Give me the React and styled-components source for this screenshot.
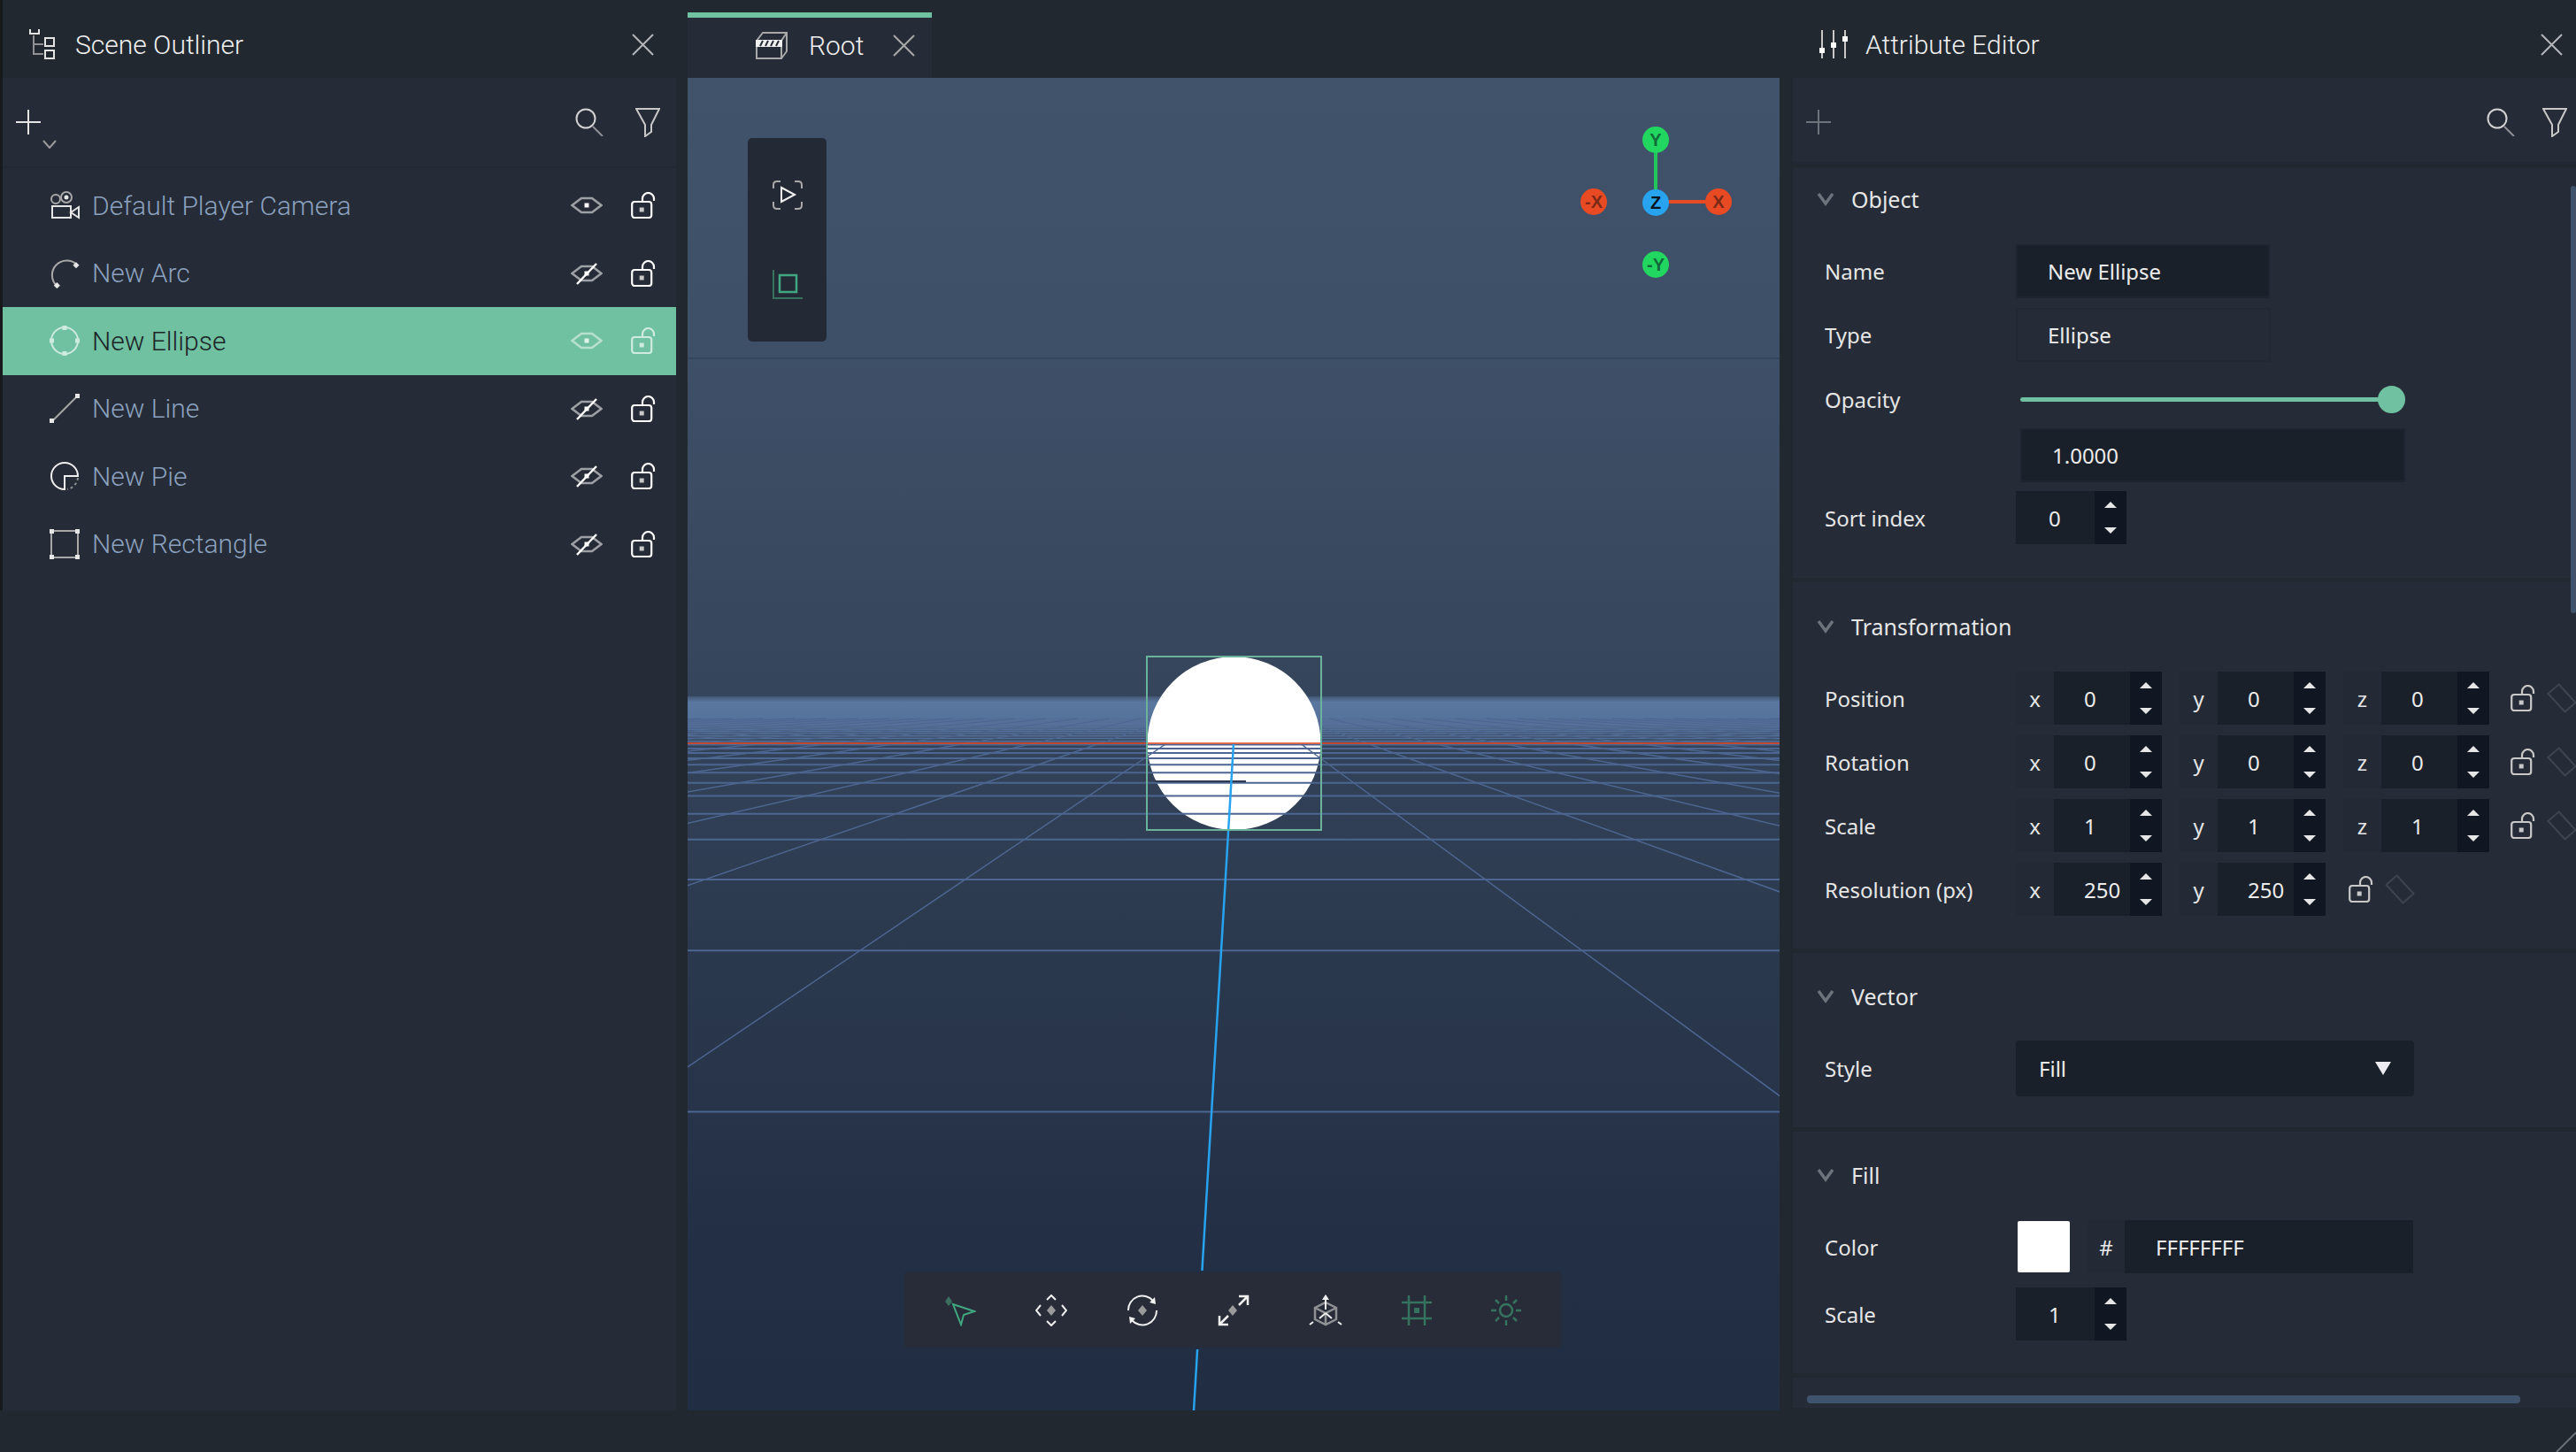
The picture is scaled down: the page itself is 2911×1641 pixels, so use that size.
import React from 'react';
import styled, { createGlobalStyle } from 'styled-components';

const GlobalStyle = createGlobalStyle`
  html, body {
    margin: 0;
    padding: 0;
    background: #212830;
    overflow: hidden;
  }
  * {
    box-sizing: border-box;
  }
`;

const Page = styled.div`
  position: relative;
  width: 2911px;
  height: 1641px;
  display: flex;
  flex-direction: column;
  background: #212830;
  color: #e8e8e8;
  font-family: Roboto, sans-serif;
  overflow: hidden;
`;
const Main = styled.div`
  display: flex;
  height: 1594px;
`;
const Grip = styled.svg`
  position: absolute;
  right: 0;
  bottom: 0;
`;

/* shared panel parts */
const PanelHeader = styled.div`
  height: 88px;
  flex: none;
  display: flex;
  align-items: center;
  padding-top: 12px;
  padding-left: ${(p) => p.$pl}px;
  padding-right: ${(p) => p.$pr}px;
`;
const PanelTitle = styled.div`
  font-size: 30px;
  font-weight: 300;
  color: #f0f0f0;
  margin-left: ${(p) => p.$ml}px;
  flex: 1;
`;
const Toolbar = styled.div`
  height: ${(p) => p.$h}px;
  flex: none;
  display: flex;
  align-items: center;
  padding-top: ${(p) => p.$pt || 0}px;
  padding-right: ${(p) => p.$pr}px;
  background: #252b37;
  border-bottom: 2px solid #212a34;
`;
const ToolGap = styled.div`
  width: ${(p) => p.$w}px;
  flex: none;
`;
const Spacer = styled.div`
  flex: 1;
`;

/* left panel */
const LeftColumn = styled.div`
  width: 777px;
  flex: none;
  display: flex;
  flex-direction: column;
  border-left: 3px solid #17191d;
`;
const LeftBody = styled.div`
  width: 761px;
  flex: 1;
  display: flex;
  flex-direction: column;
  background: #252b37;
`;
const AddWrap = styled.div`
  position: relative;
  width: 28px;
  height: 28px;
  margin-left: 15px;
`;
const AddChevron = styled.svg`
  position: absolute;
  left: 30px;
  top: 34px;
`;
const List = styled.div`
  padding-top: 4px;
`;
const ListRow = styled.div`
  height: 76.5px;
  display: flex;
  align-items: center;
  padding-left: 53px;
  padding-right: 23px;
  background: ${(p) => (p.$active ? '#70c1a1' : 'transparent')};
  color: ${(p) => (p.$active ? '#1c2428' : '#8ba1be')};
`;
const RowIcon = styled.div`
  width: 34px;
  height: 34px;
  display: flex;
  align-items: center;
  justify-content: center;
  margin-right: 14px;
`;
const RowName = styled.div`
  flex: 1;
  font-size: 30px;
  font-weight: 300;
`;
const RowActions = styled.div`
  display: flex;
  align-items: center;
  gap: 32px;
`;

/* centre */
const CenterColumn = styled.div`
  width: 1234px;
  flex: none;
  display: flex;
  flex-direction: column;
`;
const TabStrip = styled.div`
  height: 88px;
  flex: none;
  padding-top: 14px;
  display: flex;
`;
const Tab = styled.div`
  width: 276px;
  display: flex;
  align-items: center;
  padding-left: 77px;
  padding-bottom: 5px;
  background: #252b37;
  border-top: 6px solid #70c1a1;
`;
const TabTitle = styled.div`
  font-size: 30px;
  font-weight: 300;
  margin-left: 24px;
  margin-right: 33px;
  color: #f0f0f0;
`;
const Viewport = styled.div`
  position: relative;
  flex: 1;
  overflow: hidden;
  background: linear-gradient(
    180deg,
    #41536b 0%,
    #3e5068 20%,
    #36465c 44%,
    #2a384d 67%,
    #27344a 77%,
    #222f44 87%,
    #202d42 100%
  );
`;
const GridSvg = styled.svg`
  position: absolute;
  left: 0;
  top: 0;
`;
const SideTools = styled.div`
  position: absolute;
  left: 68px;
  top: 68px;
  width: 89px;
  height: 230px;
  display: flex;
  flex-direction: column;
  align-items: center;
  justify-content: center;
  gap: 68px;
  background: #232a36;
  border-radius: 5px;
`;
const BottomTools = styled.div`
  position: absolute;
  left: 243px;
  top: 1348px;
  width: 746px;
  height: 89px;
  display: flex;
  align-items: center;
  justify-content: space-between;
  padding: 0 45px;
  background: #272c38;
  border: 2px solid #222f42;
  border-radius: 6px;
`;
const AxisBall = styled.div`
  position: absolute;
  left: ${(p) => p.$x - 777 - 15}px;
  top: ${(p) => p.$y - 88 - 15}px;
  width: 30px;
  height: 30px;
  border-radius: 50%;
  display: flex;
  align-items: center;
  justify-content: center;
  background: ${(p) => p.$bg};
  color: ${(p) => p.$fg};
  font-family: 'Liberation Sans', sans-serif;
  font-size: 20px;
  font-weight: 700;
`;

/* right panel */
const RightColumn = styled.div`
  position: relative;
  width: 900px;
  flex: none;
  display: flex;
  flex-direction: column;
`;
const RightBody = styled.div`
  margin-left: 15px;
  flex: 1;
  display: flex;
  flex-direction: column;
  gap: 5px;
  overflow: hidden;
`;
const Section = styled.div`
  background: #252b37;
  padding-top: ${(p) => p.$pt}px;
  padding-bottom: ${(p) => p.$pb}px;
`;
const SectionHeader = styled.div`
  height: 70px;
  margin-bottom: 10px;
  display: flex;
  align-items: center;
  padding-left: 27px;
  gap: 19px;
  font-family: 'Noto Sans', sans-serif;
  font-size: 25px;
  color: #e6e6e6;
`;
const Row = styled.div`
  height: ${(p) => p.$h || 72}px;
  margin-top: ${(p) => p.$mt || 0}px;
  display: flex;
  align-items: center;
  padding-left: 36px;
  font-family: 'Noto Sans', sans-serif;
  font-size: 24px;
`;
const Label = styled.div`
  width: 216px;
  flex: none;
  color: #e6e6e6;
`;
const Field = styled.div`
  width: ${(p) => p.$w}px;
  height: 61px;
  display: flex;
  align-items: center;
  margin-left: ${(p) => p.$ml || 0}px;
  padding-left: ${(p) => p.$pl}px;
  background: ${(p) => (p.$ghost ? '#252b37' : '#1a202a')};
  border: 2px solid ${(p) => (p.$ghost ? '#232934' : '#1f2530')};
  color: #ececec;
`;
const SliderTrack = styled.div`
  position: relative;
  width: 435px;
  height: 5px;
  margin-left: 5px;
  border-radius: 3px;
  background: #70c1a1;
`;
const SliderKnob = styled.div`
  position: absolute;
  right: 0;
  top: -13px;
  width: 31px;
  height: 31px;
  border-radius: 50%;
  background: #70c1a1;
`;
const Spin = styled.div`
  width: ${(p) => p.$w || 165}px;
  height: 60px;
  flex: none;
  display: flex;
  background: #232a35;
`;
const SpinAxis = styled.div`
  width: 43px;
  flex: none;
  display: flex;
  align-items: center;
  justify-content: center;
  color: #e6e6e6;
`;
const SpinValue = styled.div`
  flex: 1;
  display: flex;
  align-items: center;
  padding-left: ${(p) => p.$pl}px;
  background: #1a202a;
  color: #ececec;
`;
const SpinButtons = styled.div`
  width: 36px;
  flex: none;
  display: flex;
  flex-direction: column;
  align-items: center;
  justify-content: space-between;
  padding: 12px 0;
  background: #111722;
`;
const Arrow = styled.div`
  width: 0;
  height: 0;
  border-left: 7px solid transparent;
  border-right: 7px solid transparent;
  border-bottom: ${(p) => (p.$down ? '0' : '7px solid #e6e6e6')};
  border-top: ${(p) => (p.$down ? '7px solid #e6e6e6' : '0')};
`;
const SpinRow = styled.div`
  display: flex;
  gap: 20px;
`;
const LockWrap = styled.div`
  margin-left: ${(p) => p.$ml}px;
  display: flex;
  align-items: center;
  gap: 13px;
`;
const Select = styled.div`
  width: 450px;
  height: 63px;
  display: flex;
  align-items: center;
  justify-content: space-between;
  padding: 0 26px;
  background: #1a202a;
  border-radius: 4px;
  color: #ececec;
`;
const SelectArrow = styled.div`
  width: 0;
  height: 0;
  border-left: 9px solid transparent;
  border-right: 9px solid transparent;
  border-top: 15px solid #ecebf2;
`;
const Swatch = styled.div`
  width: 59px;
  height: 58px;
  margin-left: 2px;
  border-radius: 2px;
  background: #ffffff;
`;
const Hash = styled.div`
  width: 42px;
  height: 60px;
  margin-left: 20px;
  display: flex;
  align-items: center;
  justify-content: center;
  background: #232a35;
`;
const HexField = styled.div`
  width: 326px;
  height: 60px;
  display: flex;
  align-items: center;
  padding-left: 35px;
  background: #1a202a;
  color: #ececec;
`;
const HScrollBand = styled.div`
  height: 34px;
  flex: none;
  padding: 20px 0 0 16px;
  background: #252b37;
`;
const HScrollThumb = styled.div`
  width: 806px;
  height: 9px;
  border-radius: 4px;
  background: #40536c;
`;
const VScrollThumb = styled.div`
  position: absolute;
  right: 0;
  top: 210px;
  width: 6px;
  height: 483px;
  border-radius: 3px;
  background: #40536c;
`;

/* icons */
const CloseIcon = ({ color = '#b4b6ba', size = 25 }) => (
  <svg width={size} height={size} viewBox="0 0 25 25" fill="none" stroke={color} strokeWidth="2">
    <path d="M1 1 L24 24 M24 1 L1 24" />
  </svg>
);
const PlusIcon = ({ color = '#e6e6e6', size = 28 }) => (
  <svg width={size} height={size} viewBox="0 0 28 28" fill="none" stroke={color} strokeWidth="2">
    <path d="M14 0 V28 M0 14 H28" />
  </svg>
);
const SearchIcon = ({ color = '#d2d2d2', eye = '#8f9195' }) => (
  <svg width="32" height="32" viewBox="0 0 32 32" fill="none" strokeWidth="2">
    <circle cx="12" cy="12" r="10.5" stroke={color} />
    <path d="M20 21 L31 32" stroke={eye} />
  </svg>
);
const FilterIcon = () => (
  <svg width="28" height="33" viewBox="0 0 28 33" fill="none" stroke="#c8c8c8" strokeWidth="2">
    <path d="M1 1 H27 L18 19 V27 L11 32 V19 Z" />
  </svg>
);
const LockIcon = ({ color = '#ffffff', dim = '#c8c8c8' }) => (
  <svg width="28" height="30" viewBox="0 0 28 30" fill="none" strokeWidth="2.2">
    <rect x="1.2" y="11" width="22" height="18" rx="3" stroke={color} />
    <rect x="9.7" y="17.5" width="5" height="5" fill={dim} />
    <path d="M13 11 V7.5 a6.5 6.5 0 0 1 13 0 V10" stroke={color} />
  </svg>
);
const EyeIcon = ({ off, color = '#9da1a5', dot = '#ffffff' }) => (
  <svg width="36" height="26" viewBox="0 0 36 26" fill="none" strokeWidth="2.5">
    <path d="M1.5 13 L12 5 H24 L34.5 13 L24 21 H12 Z" stroke={color} />
    <rect x="15.5" y="10.5" width="5" height="5" fill={dot} />
    {off && <path d="M7 25 L29 2" stroke="#ffffff" />}
  </svg>
);
const LinkIcon = () => (
  <svg width="34" height="34" viewBox="0 0 34 34" fill="none" stroke="#3e444f" strokeWidth="2.2" strokeLinejoin="round">
    <path d="M1.5 12 L13.5 1.5 L32.5 22 L20.5 32.5 Z" />
  </svg>
);
const ChevronIcon = () => (
  <svg width="20" height="16" viewBox="0 0 20 16" fill="none" stroke="#6d727b" strokeWidth="3.5">
    <path d="M2 2 L10 13 L18 2" />
  </svg>
);
const OutlinerIcon = () => (
  <svg width="30" height="34" viewBox="0 0 30 34" fill="none" stroke="#e4e4e4" strokeWidth="2">
    <path d="M1 0 V5 H11 V0" />
    <path d="M5 7 V28 H16 M5 17 H16" stroke="#8f9195" />
    <rect x="18" y="10" width="10" height="9" />
    <rect x="18" y="24" width="10" height="9" />
  </svg>
);
const CameraIcon = () => (
  <svg width="34" height="32" viewBox="0 0 34 32" fill="none" stroke="#e6e6e6" strokeWidth="2">
    <circle cx="7" cy="9" r="5" stroke="#a8a8a8" />
    <circle cx="19" cy="7" r="6" stroke="#a8a8a8" />
    <circle cx="19" cy="7" r="1.5" fill="#e6e6e6" />
    <rect x="3" y="17" width="21" height="13" />
    <path d="M24 24 L33 18 V30 Z" />
  </svg>
);
const ArcIcon = () => (
  <svg width="34" height="34" viewBox="0 0 34 34" fill="none" stroke="#a8a8a8" strokeWidth="2">
    <path d="M8 31 A16 16 0 0 1 31 7" />
    <rect x="5.5" y="28" width="5" height="5" fill="#e6e6e6" stroke="none" transform="rotate(45 8 31)" />
    <rect x="28" y="5" width="5" height="5" fill="#e6e6e6" stroke="none" transform="rotate(45 30 7)" />
  </svg>
);
const EllipseIcon = ({ color = '#cfeadf' }) => (
  <svg width="34" height="34" viewBox="0 0 34 34" fill="none" stroke={color} strokeWidth="2">
    <circle cx="17" cy="17" r="15" />
    <g fill={color} stroke="none">
      <rect x="14.5" y="0" width="5" height="5" />
      <rect x="14.5" y="29" width="5" height="5" />
      <rect x="0" y="14.5" width="5" height="5" />
      <rect x="29" y="14.5" width="5" height="5" />
    </g>
  </svg>
);
const LineIcon = () => (
  <svg width="34" height="34" viewBox="0 0 34 34" fill="none" stroke="#a8a8a8" strokeWidth="2">
    <path d="M3 31 L31 3" />
    <rect x="0" y="28" width="5" height="5" fill="#e6e6e6" stroke="none" />
    <rect x="29" y="0" width="5" height="5" fill="#e6e6e6" stroke="none" />
  </svg>
);
const PieIcon = () => (
  <svg width="34" height="34" viewBox="0 0 34 34" fill="none" stroke="#f0f0f0" strokeWidth="2">
    <path d="M17 32 A15 15 0 1 1 32 17 H17 Z" />
    <path d="M32 19 A15 15 0 0 1 20 32" stroke="#8f9195" strokeDasharray="3 3" />
  </svg>
);
const RectIcon = () => (
  <svg width="34" height="34" viewBox="0 0 34 34" fill="none" stroke="#a8a8a8" strokeWidth="2">
    <rect x="2" y="2" width="30" height="30" />
    <g fill="#e6e6e6" stroke="none">
      <rect x="0" y="0" width="5" height="5" />
      <rect x="29" y="0" width="5" height="5" />
      <rect x="0" y="29" width="5" height="5" />
      <rect x="29" y="29" width="5" height="5" />
    </g>
  </svg>
);
const ClapperIcon = () => (
  <svg width="36" height="33" viewBox="0 0 36 33" fill="none" stroke="#a8a8a8" strokeWidth="2">
    <path d="M1 11 L8 2 H35 L29 11 M35 2 V23 L29 31" />
    <path d="M1 11 H29 V31 H1 Z" />
    <path d="M1 11 H29 V17 H1 Z" fill="#f0f0f0" stroke="#f0f0f0" />
    <path d="M5 17 L8 11 M11 17 L14 11 M17 17 L20 11 M23 17 L26 11" stroke="#252b37" />
  </svg>
);
const SlidersIcon = () => (
  <svg width="32" height="32" viewBox="0 0 32 32" fill="none" stroke="#c8c8c8" strokeWidth="2">
    <path d="M3 0 V32 M16 0 V32 M29 0 V32" />
    <g fill="#ffffff" stroke="none">
      <rect x="0" y="20" width="6" height="6" />
      <rect x="13" y="14" width="6" height="6" />
      <rect x="26" y="7" width="6" height="6" />
    </g>
  </svg>
);
const PlayFrameIcon = () => (
  <svg width="34" height="33" viewBox="0 0 34 33" fill="none" stroke="#a8a8a8" strokeWidth="2">
    <path d="M1 9 V5 Q1 1 5 1 H9 M25 1 H29 Q33 1 33 5 V9 M33 24 V28 Q33 32 29 32 H25 M9 32 H5 Q1 32 1 28 V24" />
    <path d="M10 8 L25 16 L10 24 Z" stroke="#f0f0f0" />
  </svg>
);
const FrameIcon = () => (
  <svg width="34" height="33" viewBox="0 0 34 33" fill="none">
    <path d="M1 0 V32 H34" stroke="#35735f" strokeWidth="2" />
    <rect x="8" y="6" width="19" height="19" stroke="#41a780" strokeWidth="2.5" />
  </svg>
);
const SelectToolIcon = () => (
  <svg width="36" height="36" viewBox="0 0 36 36" fill="none">
    <path d="M5 2 L9 8 L5 13 L1 8 Z" fill="#3c6e5e" />
    <path d="M10 11 L34 19 L22 23 L19 34 Z" stroke="#41a780" strokeWidth="2" />
  </svg>
);
const MoveToolIcon = () => (
  <svg width="36" height="36" viewBox="0 0 36 36" fill="none" stroke="#f0f0f0" strokeWidth="2">
    <path d="M13 6 L18 1 L23 6 M13 30 L18 35 L23 30 M6 12 L1 18 L6 24 M30 12 L35 18 L30 24" />
    <path d="M18 12 L23 18 L18 24 L13 18 Z" fill="#9a9a9a" stroke="none" />
  </svg>
);
const RotateToolIcon = () => (
  <svg width="36" height="36" viewBox="0 0 36 36" fill="none" stroke="#f0f0f0" strokeWidth="2">
    <path d="M2 18 A16 16 0 0 1 30 7" />
    <path d="M34 18 A16 16 0 0 1 6 29" />
    <path d="M26 9 L33 11 L32 3 Z M10 27 L3 25 L4 33 Z" fill="#f0f0f0" stroke="none" />
    <path d="M18 12 L23 18 L18 24 L13 18 Z" fill="#9a9a9a" stroke="none" />
  </svg>
);
const ScaleToolIcon = () => (
  <svg width="36" height="36" viewBox="0 0 36 36" fill="none" stroke="#f0f0f0" strokeWidth="2.5">
    <path d="M24 12 L34 2 M24 2 H34 V12 M12 24 L2 34 M2 24 V34 H12" />
    <path d="M17 12 L22 18 L17 24 L12 18 Z" fill="#9a9a9a" stroke="none" />
  </svg>
);
const CubeToolIcon = () => (
  <svg width="38" height="36" viewBox="0 0 38 36" fill="none" stroke="#8f9195" strokeWidth="2.5">
    <path d="M19 9 L31 15 V28 L19 34 L7 28 V15 Z M7 15 L19 21 L31 15 M19 21 V34" />
    <path d="M19 17 V1 M19 21 L12 27 M19 21 L26 27 M5 31 L1 34 M33 31 L37 34" stroke="#f0f0f0" strokeWidth="2" />
    <path d="M15 6 L19 0 L23 6 Z" fill="#f0f0f0" stroke="none" />
  </svg>
);
const SnapToolIcon = () => (
  <svg width="34" height="34" viewBox="0 0 34 34" fill="none" stroke="#35735f" strokeWidth="2.5">
    <path d="M8 0 V34 M26 0 V34 M0 8 H34 M0 26 H34" />
    <rect x="14" y="14" width="6" height="6" fill="#35735f" stroke="none" />
  </svg>
);
const SunToolIcon = () => (
  <svg width="34" height="34" viewBox="0 0 34 34" fill="none" stroke="#35735f" strokeWidth="2.5">
    <circle cx="17" cy="17" r="7" />
    <path d="M17 0 V6 M17 28 V34 M0 17 H6 M28 17 H34 M5 5 L9 9 M25 25 L29 29 M5 29 L9 25 M25 9 L29 5" />
  </svg>
);

/* 3d grid, coordinates are page pixels through the viewBox */
const VANISH_X = 1397;
const VANISH_Y = 787;
const rowY = (k) => VANISH_Y + 1 / (0.00213 + 0.00135 * k);
const colX = (n, y) => VANISH_X + (y - VANISH_Y) * (-0.06 + 1.42 * n);
const GRID = '#4d6691';

const horizontals = (from, to) => {
  const out = [];
  for (let k = 0; k < 140; k++) {
    const y = rowY(k);
    if (y >= from && y < to) out.push(y);
  }
  return out;
};
const columns = [];
for (let n = -70; n <= 70; n++) if (n !== 0) columns.push(n);

const Grid = () => (
  <GridSvg width="1234" height="1506" viewBox="777 88 1234 1506">
    <defs>
      <linearGradient id="band" x1="0" y1="0" x2="0" y2="1">
        <stop offset="0" stopColor="#435672" />
        <stop offset="0.12" stopColor="#5a779f" />
        <stop offset="0.55" stopColor="#55729b" />
        <stop offset="0.68" stopColor="#3f5372" />
        <stop offset="1" stopColor="#36465f" />
      </linearGradient>
    </defs>
    <path d="M777 405 H2011" stroke="#34465e" strokeWidth="2" />
    <rect x="777" y="787" width="1234" height="53" fill="url(#band)" />
    {horizontals(812, 840.5).map((y) => (
      <path key={y} d={`M777 ${y} H2011`} stroke="#557199" strokeWidth="1.5" />
    ))}
    {columns.map((n) => (
      <path
        key={n}
        d={`M${colX(n, 812)} 812 L${colX(n, 841)} 841`}
        stroke="#4d6691"
        strokeWidth="1"
      />
    ))}
    <circle cx="1394.5" cy="840" r="98" fill="#ffffff" />
    {horizontals(840.5, 2000).map((y) => (
      <path key={y} d={`M777 ${y} H2011`} stroke={GRID} strokeWidth="2" />
    ))}
    {columns.map((n) => (
      <path
        key={n}
        d={`M${colX(n, 841)} 841 L${colX(n, 1594)} 1594`}
        stroke={GRID}
        strokeWidth="1.5"
      />
    ))}
    <path d="M1305 883 H1408" stroke="#2d3a50" strokeWidth="2" />
    <path d="M1394 840 L1349 1594" stroke="#27a3ef" strokeWidth="2.5" />
    <path d="M777 840 H2011" stroke="#e8481f" strokeWidth="1.5" />
    <rect x="1296" y="742" width="197" height="196" fill="none" stroke="#6ab39a" strokeWidth="2" />
    <path d="M1871 172 V222" stroke="#22c45c" strokeWidth="4" />
    <path d="M1885 228 H1930" stroke="#e84a23" strokeWidth="4" />
  </GridSvg>
);

const rows = [
  { name: 'Default Player Camera', icon: <CameraIcon /> },
  { name: 'New Arc', icon: <ArcIcon />, off: true },
  { name: 'New Ellipse', icon: <EllipseIcon />, active: true },
  { name: 'New Line', icon: <LineIcon />, off: true },
  { name: 'New Pie', icon: <PieIcon />, off: true },
  { name: 'New Rectangle', icon: <RectIcon />, off: true },
];

const balls = [
  { x: 1871, y: 158, bg: '#22d760', fg: '#116a3a', t: 'Y' },
  { x: 1801, y: 228, bg: '#e84a23', fg: '#7c2a17', t: '-X' },
  { x: 1942, y: 228, bg: '#e84a23', fg: '#7c2a17', t: 'X' },
  { x: 1871, y: 229, bg: '#27a3ef', fg: '#07131f', t: 'Z' },
  { x: 1871, y: 299, bg: '#22d760', fg: '#116a3a', t: '-Y' },
];

const Spinner = ({ axis, value }) => (
  <Spin>
    <SpinAxis>{axis}</SpinAxis>
    <SpinValue $pl={34}>{value}</SpinValue>
    <SpinButtons>
      <Arrow />
      <Arrow $down />
    </SpinButtons>
  </Spin>
);
const SmallSpinner = ({ value }) => (
  <Spin $w={125}>
    <SpinValue $pl={37}>{value}</SpinValue>
    <SpinButtons>
      <Arrow />
      <Arrow $down />
    </SpinButtons>
  </Spin>
);
const TripleRow = ({ label, value }) => (
  <Row>
    <Label>{label}</Label>
    <SpinRow>
      <Spinner axis="x" value={value} />
      <Spinner axis="y" value={value} />
      <Spinner axis="z" value={value} />
    </SpinRow>
    <LockWrap $ml={24}>
      <LockIcon color="#c8c8c8" />
      <LinkIcon />
    </LockWrap>
  </Row>
);

const App = () => {
  return (
    <Page>
      <GlobalStyle />
      <Main>
        <LeftColumn>
          <PanelHeader $pl={30} $pr={38}>
            <OutlinerIcon />
            <PanelTitle $ml={22}>Scene Outliner</PanelTitle>
            <CloseIcon />
          </PanelHeader>
          <LeftBody>
            <Toolbar $h={102} $pr={18}>
              <AddWrap>
                <PlusIcon />
                <AddChevron width="16" height="10" viewBox="0 0 16 10" fill="none" stroke="#9a9a9a" strokeWidth="2">
                  <path d="M1 1 L8 9 L15 1" />
                </AddChevron>
              </AddWrap>
              <Spacer />
              <SearchIcon />
              <ToolGap $w={36} />
              <FilterIcon />
            </Toolbar>
            <List>
              {rows.map((r) => (
                <ListRow key={r.name} $active={r.active}>
                  <RowIcon>{r.icon}</RowIcon>
                  <RowName>{r.name}</RowName>
                  <RowActions>
                    <EyeIcon
                      off={r.off}
                      color={r.active ? '#b7e0cf' : '#9da1a5'}
                      dot={r.active ? '#dff3ea' : '#ffffff'}
                    />
                    <LockIcon
                      color={r.active ? '#cfeadf' : '#ffffff'}
                      dim={r.active ? '#cfeadf' : '#c8c8c8'}
                    />
                  </RowActions>
                </ListRow>
              ))}
            </List>
          </LeftBody>
        </LeftColumn>

        <CenterColumn>
          <TabStrip>
            <Tab>
              <ClapperIcon />
              <TabTitle>Root</TabTitle>
              <CloseIcon color="#a8a8a8" />
            </Tab>
          </TabStrip>
          <Viewport>
            <Grid />
            {balls.map((b) => (
              <AxisBall key={b.t} $x={b.x} $y={b.y} $bg={b.bg} $fg={b.fg}>
                {b.t}
              </AxisBall>
            ))}
            <SideTools>
              <PlayFrameIcon />
              <FrameIcon />
            </SideTools>
            <BottomTools>
              <SelectToolIcon />
              <MoveToolIcon />
              <RotateToolIcon />
              <ScaleToolIcon />
              <CubeToolIcon />
              <SnapToolIcon />
              <SunToolIcon />
            </BottomTools>
          </Viewport>
        </CenterColumn>

        <RightColumn>
          <PanelHeader $pl={45} $pr={15}>
            <SlidersIcon />
            <PanelTitle $ml={20}>Attribute Editor</PanelTitle>
            <CloseIcon />
          </PanelHeader>
          <RightBody>
            <Toolbar $h={97} $pt={5} $pr={10}>
              <AddWrap>
                <PlusIcon color="#6d727b" />
              </AddWrap>
              <Spacer />
              <SearchIcon />
              <ToolGap $w={31} />
              <FilterIcon />
            </Toolbar>

            <Section $pt={0} $pb={38}>
              <SectionHeader>
                <ChevronIcon />
                Object
              </SectionHeader>
              <Row>
                <Label>Name</Label>
                <Field $w={287} $pl={34}>New Ellipse</Field>
              </Row>
              <Row>
                <Label>Type</Label>
                <Field $w={288} $pl={34} $ghost>Ellipse</Field>
              </Row>
              <Row $h={64} $mt={5}>
                <Label>Opacity</Label>
                <SliderTrack>
                  <SliderKnob />
                </SliderTrack>
              </Row>
              <Row $h={62}>
                <Label />
                <Field $w={435} $ml={5} $pl={34}>1.0000</Field>
              </Row>
              <Row $h={60} $mt={10}>
                <Label>Sort index</Label>
                <SmallSpinner value="0" />
              </Row>
            </Section>

            <Section $pt={15} $pb={31}>
              <SectionHeader>
                <ChevronIcon />
                Transformation
              </SectionHeader>
              <TripleRow label="Position" value="0" />
              <TripleRow label="Rotation" value="0" />
              <TripleRow label="Scale" value="1" />
              <Row>
                <Label>Resolution (px)</Label>
                <SpinRow>
                  <Spinner axis="x" value="250" />
                  <Spinner axis="y" value="250" />
                </SpinRow>
                <LockWrap $ml={26}>
                  <LockIcon color="#c8c8c8" />
                  <LinkIcon />
                </LockWrap>
              </Row>
            </Section>

            <Section $pt={14} $pb={31}>
              <SectionHeader>
                <ChevronIcon />
                Vector
              </SectionHeader>
              <Row>
                <Label>Style</Label>
                <Select>
                  Fill
                  <SelectArrow />
                </Select>
              </Row>
            </Section>

            <Section $pt={14} $pb={31}>
              <SectionHeader>
                <ChevronIcon />
                Fill
              </SectionHeader>
              <Row>
                <Label>Color</Label>
                <Swatch />
                <Hash>#</Hash>
                <HexField>FFFFFFFF</HexField>
              </Row>
              <Row $mt={4}>
                <Label>Scale</Label>
                <SmallSpinner value="1" />
              </Row>
            </Section>

            <HScrollBand>
              <HScrollThumb />
            </HScrollBand>
          </RightBody>
          <VScrollThumb />
        </RightColumn>
      </Main>
      <Grip width="24" height="24" viewBox="0 0 24 24" fill="none" stroke="#6b7078" strokeWidth="2">
        <path d="M24 2 L2 24" />
      </Grip>
    </Page>
  );
};

export default App;
